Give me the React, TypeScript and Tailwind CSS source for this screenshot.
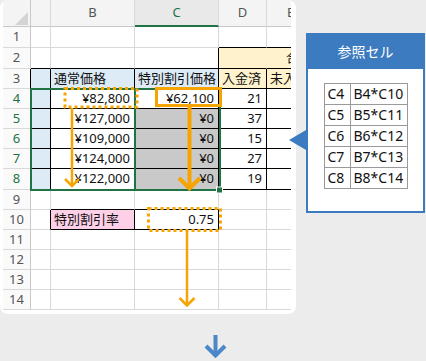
import React from 'react'

type Cell = {
  t?: string
  bg?: string
  rc?: string
  bc?: string
  al?: 'r' | 'l'
  cls?: string
}

const K = 'border-r-black'
const KB = 'border-b-black'

const rowLabels = ['1', '2', '3', '4', '5', '6', '7', '8', '9', '10', '11', '12', '13', '14']

const blue = 'bg-[#ddebf7]'
const cream = 'bg-[#fff2cc]'
const grey = 'bg-[#c9c9c9]'

const tRow = (b: string, c: string, cbg: string, d: string): Cell[] => [
  { bg: blue, rc: K, bc: KB },
  { t: b, al: 'r', rc: K, bc: KB },
  { t: c, al: 'r', bg: cbg, rc: K, bc: KB },
  { t: d, al: 'r', rc: K, bc: KB },
  { rc: K, bc: KB },
]

const rows: Cell[][] = [
  [{}, {}, {}, { bc: KB }, { bc: KB }],
  [
    { bc: KB },
    { bc: KB },
    { rc: K, bc: KB },
    { bg: cream, rc: 'border-r-[#fff2cc]', bc: KB },
    { t: '合計', al: 'l', bg: cream, bc: KB, cls: 'pl-[19px]' },
  ],
  [
    { bg: blue, rc: K, bc: KB },
    { t: '通常価格', al: 'l', bg: blue, rc: K, bc: KB },
    { t: '特別割引価格', al: 'l', bg: blue, rc: K, bc: KB },
    { t: '入金済', al: 'l', bg: cream, rc: K, bc: KB },
    { t: '未入金', al: 'l', bg: cream, rc: K, bc: KB },
  ],
  tRow('¥82,800', '¥62,100', 'bg-white', '21'),
  tRow('¥127,000', '¥0', grey, '37'),
  tRow('¥109,000', '¥0', grey, '15'),
  tRow('¥124,000', '¥0', grey, '27'),
  tRow('¥122,000', '¥0', grey, '19'),
  [{}, { bc: KB }, { bc: KB }, {}, {}],
  [
    { rc: K },
    { t: '特別割引率', al: 'l', bg: 'bg-[#fdd0e8]', rc: K, bc: KB },
    { t: '0.75', al: 'r', rc: K, bc: KB },
    {},
    {},
  ],
  [{}, {}, {}, {}, {}],
  [{}, {}, {}, {}, {}],
  [{}, {}, {}, {}, {}],
  [{}, {}, {}, {}, {}],
]

function GridCell({ c }: { c: Cell }) {
  const align = c.al === 'r' ? 'justify-end pr-[4px]' : c.al === 'l' ? 'justify-start pl-[3px]' : 'justify-center'
  return (
    <div
      className={`flex items-center overflow-hidden whitespace-nowrap border-r border-b text-[13px] text-[#111] ${
        c.rc ?? 'border-r-[#d9d9d9]'
      } ${c.bc ?? 'border-b-[#d9d9d9]'} ${c.bg ?? 'bg-white'} ${align} ${c.cls ?? ''}`}
    >
      {c.t}
    </div>
  )
}

function Sheet() {
  return (
    <div className="w-[288px] overflow-hidden">
      <div className="grid w-[312px] grid-cols-[28px_20px_84px_84px_48px_48px] grid-rows-[27px_21px_21px_20px_20px_20px_20px_20px_21px_20px_20px_20px_20px_20px_20px]">
        {/* column headers */}
        <div className="relative border-r border-b border-r-[#c8c8c8] border-b-[#c8c8c8] bg-[#f4f4f4]">
          <svg className="absolute left-0 top-0" width="28" height="27">
            <polygon points="25,12 25,25 12,25" fill="#d4d4d4" />
          </svg>
        </div>
        <div className="border-r border-b border-r-[#d9d9d9] border-b-[#c8c8c8] bg-[#f4f4f4]" />
        <div className="flex items-center justify-center border-r border-b border-r-[#d9d9d9] border-b-[#c8c8c8] bg-[#f4f4f4] text-[13px] text-[#555]">
          B
        </div>
        <div className="flex items-center justify-center border-r border-b-2 border-r-[#d9d9d9] border-b-[#217346] bg-[#e9e9e9] text-[13px] text-[#217346]">
          C
        </div>
        <div className="flex items-center justify-center border-r border-b border-r-[#d9d9d9] border-b-[#c8c8c8] bg-[#f4f4f4] text-[13px] text-[#555]">
          D
        </div>
        <div className="flex items-center justify-center border-r border-b border-r-[#d9d9d9] border-b-[#c8c8c8] bg-[#f4f4f4] text-[13px] text-[#555]">
          E
        </div>

        {rows.map((r, i) => (
          <React.Fragment key={i}>
            <div
              className={`flex items-center justify-center border-r border-b border-b-[#d9d9d9] bg-[#fafafa] text-[13px] ${
                i >= 2 && i <= 7 ? 'border-r-black' : 'border-r-[#c8c8c8]'
              } ${i >= 3 && i <= 7 ? 'text-[#217346]' : 'text-[#555]'}`}
            >
              {rowLabels[i]}
            </div>
            {r.map((c, j) => (
              <GridCell key={j} c={c} />
            ))}
          </React.Fragment>
        ))}
      </div>
    </div>
  )
}

function Overlay() {
  const o = '#f5a400'
  return (
    <svg className="pointer-events-none absolute left-0 top-0" width="296" height="314">
      {/* selections */}
      <rect x="31" y="89" width="104" height="101" fill="none" stroke="#217346" strokeWidth="2" />
      <rect x="135" y="89" width="85" height="101" fill="none" stroke="#217346" strokeWidth="2" />
      <rect x="216.5" y="187" width="6" height="6" fill="#217346" stroke="#fff" strokeWidth="1" />

      {/* B4 dotted */}
      <rect x="65" y="88.5" width="72" height="18.5" fill="none" stroke={o} strokeWidth="3" strokeDasharray="3 3" />
      <line x1="72" y1="108" x2="72" y2="186" stroke={o} strokeWidth="2.5" />
      <polyline points="65,179 72,186 79,179" fill="none" stroke={o} strokeWidth="2.5" />

      {/* C4 solid */}
      <rect x="156.5" y="88.5" width="64" height="17" fill="none" stroke={o} strokeWidth="3" />
      <line x1="189.5" y1="107" x2="189.5" y2="188" stroke={o} strokeWidth="4" />
      <polyline points="179,178 189.5,188.5 200,178" fill="none" stroke={o} strokeWidth="4" />

      {/* C10 dotted */}
      <rect x="148.5" y="208.5" width="72" height="22" fill="none" stroke={o} strokeWidth="3" strokeDasharray="3 3" />
      <line x1="187" y1="232" x2="187" y2="305" stroke={o} strokeWidth="2.5" />
      <polyline points="179.5,298 187,305.5 194.5,298" fill="none" stroke={o} strokeWidth="2.5" />
    </svg>
  )
}

const refs = [
  ['C4', 'B4*C10'],
  ['C5', 'B5*C11'],
  ['C6', 'B6*C12'],
  ['C7', 'B7*C13'],
  ['C8', 'B8*C14'],
]

function RefPanel() {
  return (
    <div className="relative ml-[10px] mt-[33px] flex h-[180px] w-[119px] flex-col">
      <svg className="absolute left-[-17px] top-[97px]" width="17" height="20">
        <polygon points="0,10 17,0 17,20" fill="#3c7bbf" />
      </svg>
      <div className="flex h-[36px] items-center justify-center bg-[#3c7bbf] text-[14px] text-white">参照セル</div>
      <div className="flex flex-1 justify-center border-2 border-t-0 border-[#3c7bbf] bg-white pt-[14px]">
        <table className="h-fit border-collapse text-[14px] text-[#111]">
          <tbody>
            {refs.map(([a, b]) => (
              <tr key={a} className="h-[21px]">
                <td className="w-[26px] border border-[#9a9a9a] px-[3px] leading-none">{a}</td>
                <td className="w-[57px] border border-[#9a9a9a] px-[3px] leading-none">{b}</td>
              </tr>
            ))}
          </tbody>
        </table>
      </div>
    </div>
  )
}

export default function App() {
  return (
    <div className="flex h-[361px] w-[426px] items-start overflow-hidden bg-[#ececec] font-['Noto_Sans','Noto_Sans_CJK_JP',sans-serif]">
      <div className="flex flex-col">
        <div className="relative h-[314px] w-[296px] overflow-hidden rounded-lg bg-white pl-[3px]">
          <Sheet />
          <Overlay />
        </div>
        <div className="pl-[204px] pt-[21px]">
          <svg width="23" height="23">
            <line x1="11.5" y1="0" x2="11.5" y2="20" stroke="#4a88c8" strokeWidth="4" />
            <polyline points="2,11 11.5,20.5 21,11" fill="none" stroke="#4a88c8" strokeWidth="4" />
          </svg>
        </div>
      </div>
      <RefPanel />
    </div>
  )
}
